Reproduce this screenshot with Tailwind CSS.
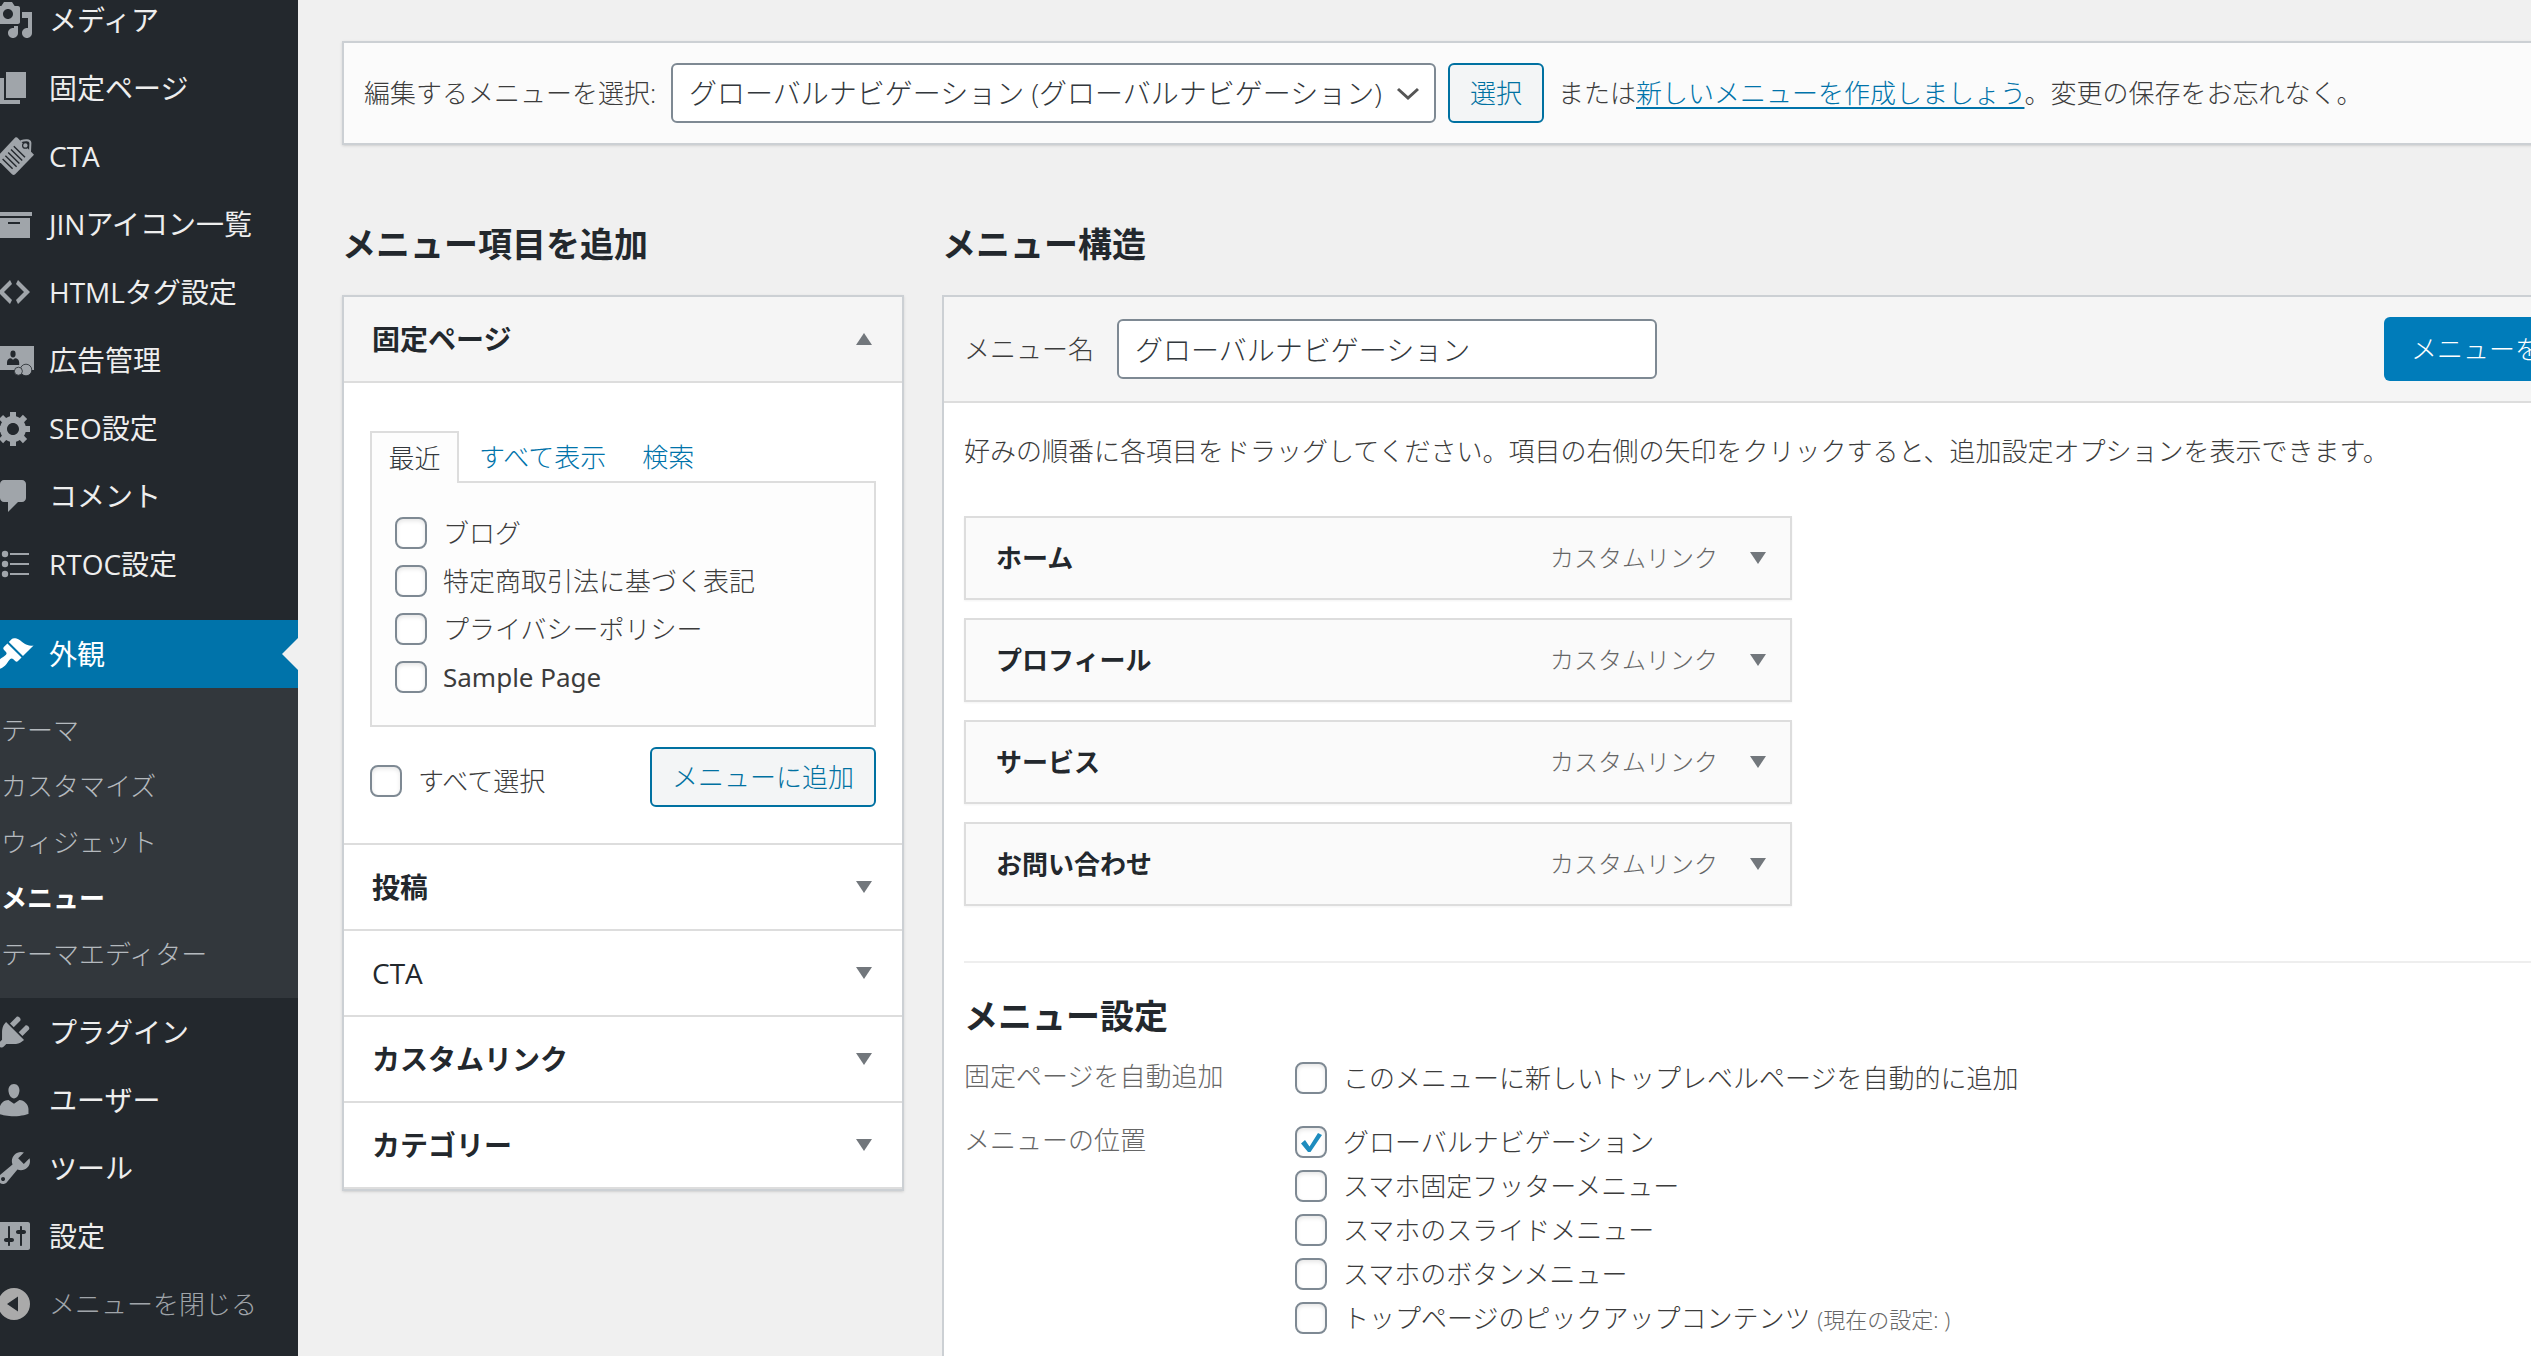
<!DOCTYPE html>
<html lang="ja">
<head>
<meta charset="utf-8">
<title>メニュー</title>
<script src="https://cdn.jsdelivr.net/npm/@tailwindcss/browser@4"></script>
</head>
<body class="flex h-screen overflow-hidden bg-[#f0f0f0] font-['Open_Sans','Noto_Sans_CJK_JP',sans-serif] text-[26px] leading-9 font-light text-[#3c3c3c]">

<nav class="w-[298px] shrink-0 overflow-hidden bg-[#23282d] text-[28px] font-normal text-[#eee]">
  <ul class="-mt-3.5 pb-[22px]">
    <li><a href="#" class="flex h-17 items-center gap-[15px] whitespace-nowrap"><svg class="-ml-1.5 size-10 shrink-0 fill-[#a0a5aa]" viewBox="0 0 20 20"><path d="M13 11V4c0-.55-.45-1-1-1h-1.67L9 1H5L3.67 3H2c-.55 0-1 .45-1 1v7c0 .55.45 1 1 1h10c.55 0 1-.45 1-1zM7 4.5c1.38 0 2.5 1.12 2.5 2.5S8.38 9.5 7 9.5 4.5 8.38 4.5 7 5.62 4.5 7 4.5zM14 6h5v10.5c0 1.38-1.12 2.5-2.5 2.5S14 17.88 14 16.5s1.12-2.5 2.5-2.5c.17 0 .34.02.5.05V9h-3V6zm-4 8.05V13h2v3.5c0 1.38-1.12 2.5-2.5 2.5S7 17.88 7 16.5 8.12 14 9.5 14c.17 0 .34.02.5.05z"/></svg>メディア</a></li>
    <li><a href="#" class="flex h-17 items-center gap-[15px] whitespace-nowrap"><svg class="-ml-1.5 size-10 shrink-0 fill-[#a0a5aa]" viewBox="0 0 20 20"><path d="M6 15V2h10v13H6zm-1 1h8v2H3V5h2v11z"/></svg>固定ページ</a></li>
    <li><a href="#" class="flex h-17 items-center gap-[15px] whitespace-nowrap"><svg class="-ml-1.5 size-10 shrink-0 fill-[#a0a5aa]" viewBox="0 0 20 20"><path d="M11.6.8 20 9.4 10.600 19.100Q9.800 19.800 9 19.100L1.500 11.600Q1 11 1.500 10.400L10.600.8Q11.100.4 11.600.8Z"/><path d="M13.300 2.600C15.500 2 18 1.800 18.200 3.400L18 8" fill="none" stroke="#a0a5aa" stroke-width="1"/><circle cx="15.700" cy="4.700" r="1.400" stroke="#23282d" stroke-width=".6"/><path d="m9.900 5.100 5.600 5.500M8.500 6.700l5.600 5.500M7.100 8.300l5.600 5.500M5.700 9.900l5.600 5.500M4.300 11.500l5 4.900" stroke="#23282d" stroke-width=".7"/></svg>CTA</a></li>
    <li><a href="#" class="flex h-17 items-center gap-[15px] whitespace-nowrap"><svg class="-ml-1.5 size-10 shrink-0 fill-[#a0a5aa]" viewBox="0 0 20 20"><path d="M19 4v2H1V4h18zM2 7h16v10H2V7zm11 3V9H7v1h6z"/></svg>JINアイコン一覧</a></li>
    <li><a href="#" class="flex h-17 items-center gap-[15px] whitespace-nowrap"><svg class="-ml-1.5 size-10 shrink-0 fill-[#a0a5aa]" viewBox="0 0 20 20"><path d="M9 6l-4 4 4 4-1 2-6-6 6-6zm2 8l4-4-4-4 1-2 6 6-6 6z"/></svg>HTMLタグ設定</a></li>
    <li><a href="#" class="flex h-17 items-center gap-[15px] whitespace-nowrap"><svg class="-ml-1.5 size-10 shrink-0 fill-[#a0a5aa]" viewBox="0 0 20 20"><path d="M0 3h20v12H0z"/><g fill="#23282d"><ellipse cx="9.500" cy="7" rx="1.300" ry="1.700"/><path d="M6.500 12.500v-1.300q0-2 2-2.100l1 .8 1-.8q2 .1 2.100 2.100v1.300z"/></g><g stroke="#23282d" stroke-width=".4"><circle cx="16" cy="15" r="2.900"/><circle cx="12.200" cy="15.600" r="2"/></g></svg>広告管理</a></li>
    <li><a href="#" class="flex h-17 items-center gap-[15px] whitespace-nowrap"><svg class="-ml-1.5 size-10 shrink-0 fill-[#a0a5aa]" viewBox="0 0 20 20"><path d="M18 12h-2.18c-.17.7-.44 1.35-.81 1.93l1.54 1.54-2.1 2.1-1.54-1.54c-.58.36-1.23.63-1.91.79V19H8v-2.18c-.68-.16-1.33-.43-1.91-.79l-1.54 1.54-2.12-2.12 1.54-1.54c-.36-.58-.63-1.23-.79-1.91H1V9.03h2.17c.16-.7.44-1.35.8-1.94L2.43 5.55l2.1-2.1 1.54 1.54c.58-.37 1.24-.64 1.93-.81V2h3v2.18c.68.16 1.33.43 1.91.79l1.54-1.54 2.12 2.12-1.54 1.54c.36.59.64 1.24.8 1.94H18V12zm-8.5 1.5c1.66 0 3-1.34 3-3s-1.34-3-3-3-3 1.34-3 3 1.34 3 3 3z"/></svg>SEO設定</a></li>
    <li><a href="#" class="flex h-17 items-center gap-[15px] whitespace-nowrap"><svg class="-ml-1.5 size-10 shrink-0 fill-[#a0a5aa]" viewBox="0 0 20 20"><path d="M5 2h9c1.1 0 2 .9 2 2v7c0 1.1-.9 2-2 2h-2l-5 5v-5H5c-1.1 0-2-.9-2-2V4c0-1.1.9-2 2-2z"/></svg>コメント</a></li>
    <li><a href="#" class="flex h-17 items-center gap-[15px] whitespace-nowrap"><svg class="-ml-1.5 size-10 shrink-0 fill-[#a0a5aa]" viewBox="0 0 20 20"><circle cx="5.500" cy="5" r="1.600"/><circle cx="5.500" cy="10" r="1.600"/><circle cx="5.500" cy="15" r="1.600"/><path d="M8 4.500h9.500v1H8zM8 9.500h9.500v1H8zM8 14.500h9.500v1H8z"/></svg>RTOC設定</a></li>
  </ul>
  <a href="#" class="relative flex h-17 items-center gap-[15px] bg-[#0073aa] text-white"><svg class="-ml-1.5 size-10 shrink-0 fill-white" viewBox="0 0 20 20"><path d="M14.48 11.06L7.41 3.99l1.5-1.5c.5-.56 2.3-.47 3.51.32 1.21.8 1.43 1.28 2.91 2.1 1.18.64 2.45 1.26 4.45.85zm-.71.71L6.7 4.7 4.93 6.47c-.39.39-.39 1.02 0 1.41l1.06 1.06c.39.39.39 1.03 0 1.42-.6.6-1.43 1.11-2.21 1.69-.35.26-.7.53-1.01.84C1.43 14.23.4 16.08 1.4 17.07c.99 1 2.84-.03 4.18-1.36.31-.31.58-.66.85-1.02.57-.78 1.08-1.61 1.69-2.21.39-.39 1.02-.39 1.41 0l1.06 1.06c.39.39 1.02.39 1.41 0z"/></svg>外観<svg class="absolute top-[18px] right-0 h-8 w-4 fill-[#f0f0f0]" viewBox="0 0 16 32"><path d="M16 0v32L0 16z"/></svg></a>
  <ul class="bg-[#32373c] pt-3.5 pb-4 pl-px text-[26px] font-light text-[#b4b9be]">
    <li><a href="#" class="flex h-14 items-center">テーマ</a></li>
    <li><a href="#" class="flex h-14 items-center">カスタマイズ</a></li>
    <li><a href="#" class="flex h-14 items-center">ウィジェット</a></li>
    <li><a href="#" class="flex h-14 items-center font-bold text-white">メニュー</a></li>
    <li><a href="#" class="flex h-14 items-center">テーマエディター</a></li>
  </ul>
  <ul>
    <li><a href="#" class="flex h-17 items-center gap-[15px] whitespace-nowrap"><svg class="-ml-1.5 size-10 shrink-0 fill-[#a0a5aa]" viewBox="0 0 20 20"><path d="M13.11 4.36L9.87 7.6 8 5.73l3.24-3.24c.35-.34 1.05-.2 1.56.32.52.51.66 1.21.31 1.55zm-8 1.77l.91-1.12 9.01 9.01-1.19.84c-.71.71-2.63 1.16-3.82 1.16H6.14L4.9 17.26c-.59.59-1.54.59-2.12 0-.59-.58-.59-1.53 0-2.12l1.24-1.24v-3.88c0-1.13.4-3.19 1.09-3.89zm7.26 3.97l3.24-3.24c.34-.35 1.04-.21 1.55.31.52.51.66 1.21.31 1.55l-3.24 3.25z"/></svg>プラグイン</a></li>
    <li><a href="#" class="flex h-17 items-center gap-[15px] whitespace-nowrap"><svg class="-ml-1.5 size-10 shrink-0 fill-[#a0a5aa]" viewBox="0 0 20 20"><path d="M10 9.25c-2.27 0-2.73-3.44-2.73-3.44C7 4.02 7.82 2 9.97 2c2.16 0 2.98 2.02 2.71 3.81 0 0-.41 3.44-2.68 3.44zm0 2.57L12.72 10c2.39 0 4.52 2.33 4.52 4.53v2.49s-3.65 1.13-7.24 1.13c-3.65 0-7.24-1.13-7.24-1.13v-2.49c0-2.25 1.94-4.48 4.47-4.48z"/></svg>ユーザー</a></li>
    <li><a href="#" class="flex h-17 items-center gap-[15px] whitespace-nowrap"><svg class="-ml-1.5 size-10 shrink-0 fill-[#a0a5aa]" viewBox="0 0 20 20"><path d="M16.68 9.77c-1.34 1.34-3.3 1.67-4.95.99l-5.41 6.52c-.99.99-2.59.99-3.58 0s-.99-2.59 0-3.57l6.52-5.42c-.68-1.65-.35-3.61.99-4.95 1.28-1.28 3.12-1.62 4.72-1.06l-2.89 2.89 2.82 2.82 2.86-2.87c.53 1.58.18 3.39-1.08 4.65zM3.81 16.21c.4.39 1.04.39 1.43 0 .4-.4.4-1.04 0-1.43-.39-.4-1.03-.4-1.43 0-.39.39-.39 1.03 0 1.43z"/></svg>ツール</a></li>
    <li><a href="#" class="flex h-17 items-center gap-[15px] whitespace-nowrap"><svg class="-ml-1.5 size-10 shrink-0 fill-[#a0a5aa]" viewBox="0 0 20 20"><path d="M18 16V4c0-.55-.45-1-1-1H3c-.55 0-1 .45-1 1v12c0 .55.45 1 1 1h14c.55 0 1-.45 1-1zM8 11h1c.55 0 1 .45 1 1s-.45 1-1 1H8v1.5c0 .28-.22.5-.5.5s-.5-.22-.5-.5V13H6c-.55 0-1-.45-1-1s.45-1 1-1h1V5.5c0-.28.22-.5.5-.5s.5.22.5.5V11zm5-2h-1c-.55 0-1-.45-1-1s.45-1 1-1h1V5.5c0-.28.22-.5.5-.5s.5.22.5.5V7h1c.55 0 1 .45 1 1s-.45 1-1 1h-1v5.5c0 .28-.22.5-.5.5s-.5-.22-.5-.5V9z"/></svg>設定</a></li>
    <li><button type="button" class="flex h-17 items-center gap-[15px] text-[26px] font-light whitespace-nowrap text-[#a0a5aa]"><svg class="-ml-1.5 size-10 shrink-0 fill-[#aaa]" viewBox="0 0 20 20"><path fill-rule="evenodd" d="M10 2a8 8 0 1 0 0 16 8 8 0 0 0 0-16zM6.500 10 12 6.200v7.600z"/></svg>メニューを閉じる</button></li>
  </ul>
</nav>

<main class="-mr-[111px] flex min-w-0 flex-1 shrink-0 flex-col pt-[41px] pl-11">
  <div class="flex h-[104px] items-center border-2 border-[#ccd0d4] bg-[#fbfbfb] pl-5 whitespace-nowrap shadow-sm">
    <label for="menu-select" class="w-[307px]">編集するメニューを選択:</label>
    <span class="relative">
      <select id="menu-select" class="h-15 w-[765px] appearance-none rounded-md border-2 border-[#7e8993] bg-white pl-4 text-[28px] text-[#32373c]"><option>グローバルナビゲーション (グローバルナビゲーション)</option></select>
      <svg class="pointer-events-none absolute top-[18px] right-4 size-6 fill-none stroke-[#555] stroke-[3]" viewBox="0 0 24 24"><path d="m2 8 10 9 10-9"/></svg>
    </span>
    <button type="button" class="ml-3 h-15 w-24 rounded-md border-2 border-[#0071a1] bg-[#f3f5f6] text-[#0071a1]">選択</button>
    <p class="ml-3.5">または<a href="#" class="text-[#0073aa] underline decoration-2 underline-offset-4">新しいメニューを作成しましょう</a>。変更の保存をお忘れなく。</p>
  </div>

  <div class="mt-[75px] flex flex-1 gap-[38px]">
    <section class="w-[562px] shrink-0">
      <h2 class="mb-[26px] text-[34px] leading-[49px] font-bold text-[#23282d]">メニュー項目を追加</h2>
      <div class="border-2 border-[#ccd0d4] bg-white shadow-sm">
        <h3><button type="button" class="flex h-[86px] w-full items-center justify-between border-b-2 border-[#ddd] bg-[#f5f5f5] pr-[30px] pl-7 text-[28px] font-bold text-[#23282d]">固定ページ<svg class="h-3 w-4 fill-[#72777c]" viewBox="0 0 16 12"><path d="M8 0l8 12H0z"/></svg></button></h3>
        <div class="h-[462px] border-b-2 border-[#ddd] px-[26px] pt-12">
          <div class="flex">
            <a href="#" class="relative -mb-0.5 flex h-[52px] w-[89px] items-center justify-center border-2 border-b-0 border-[#ddd] bg-[#fdfdfd] text-[#32373c]">最近</a>
            <a href="#" class="flex h-[52px] items-center pl-5 text-[#0073aa]">すべて表示</a>
            <a href="#" class="flex h-[52px] items-center pl-9 text-[#0073aa]">検索</a>
          </div>
          <div class="-mt-0.5 h-[246px] border-2 border-[#ddd] bg-[#fdfdfd] pt-[26px] pl-[23px]">
            <label class="flex h-12 items-center gap-4"><input type="checkbox" class="size-8 appearance-none rounded-lg border-2 border-[#7e8993] bg-white shadow-[inset_0_2px_4px_rgba(0,0,0,0.1)]">ブログ</label>
            <label class="flex h-12 items-center gap-4"><input type="checkbox" class="size-8 appearance-none rounded-lg border-2 border-[#7e8993] bg-white shadow-[inset_0_2px_4px_rgba(0,0,0,0.1)]">特定商取引法に基づく表記</label>
            <label class="flex h-12 items-center gap-4"><input type="checkbox" class="size-8 appearance-none rounded-lg border-2 border-[#7e8993] bg-white shadow-[inset_0_2px_4px_rgba(0,0,0,0.1)]">プライバシーポリシー</label>
            <label class="flex h-12 items-center gap-4 font-['Noto_Sans',sans-serif] font-normal"><input type="checkbox" class="size-8 appearance-none rounded-lg border-2 border-[#7e8993] bg-white shadow-[inset_0_2px_4px_rgba(0,0,0,0.1)]">Sample Page</label>
          </div>
          <div class="mt-5 flex items-end justify-between">
            <label class="flex items-center gap-4 pb-2"><input type="checkbox" class="size-8 appearance-none rounded-lg border-2 border-[#7e8993] bg-white shadow-[inset_0_2px_4px_rgba(0,0,0,0.1)]">すべて選択</label>
            <button type="button" class="h-15 w-[226px] rounded-md border-2 border-[#0071a1] bg-[#f3f5f6] text-[#0071a1]">メニューに追加</button>
          </div>
        </div>
        <h3><button type="button" class="flex h-[86px] w-full items-center justify-between border-b-2 border-[#ddd] pr-[30px] pl-7 text-[28px] font-bold text-[#23282d]">投稿<svg class="h-3 w-4 fill-[#72777c]" viewBox="0 0 16 12"><path d="M0 0h16L8 12z"/></svg></button></h3>
        <h3><button type="button" class="flex h-[86px] w-full items-center justify-between border-b-2 border-[#ddd] pr-[30px] pl-7 text-[28px] font-medium text-[#23282d]">CTA<svg class="h-3 w-4 fill-[#72777c]" viewBox="0 0 16 12"><path d="M0 0h16L8 12z"/></svg></button></h3>
        <h3><button type="button" class="flex h-[86px] w-full items-center justify-between border-b-2 border-[#ddd] pr-[30px] pl-7 text-[28px] font-bold text-[#23282d]">カスタムリンク<svg class="h-3 w-4 fill-[#72777c]" viewBox="0 0 16 12"><path d="M0 0h16L8 12z"/></svg></button></h3>
        <h3><button type="button" class="flex h-[86px] w-full items-center justify-between border-b-2 border-[#ddd] pr-[30px] pl-7 text-[28px] font-bold text-[#23282d]">カテゴリー<svg class="h-3 w-4 fill-[#72777c]" viewBox="0 0 16 12"><path d="M0 0h16L8 12z"/></svg></button></h3>
      </div>
    </section>

    <section class="flex min-w-0 flex-1 flex-col">
      <h2 class="mb-[26px] text-[34px] leading-[49px] font-bold text-[#23282d]">メニュー構造</h2>
      <div class="flex-1 border-2 border-b-0 border-[#ccd0d4] bg-white whitespace-nowrap">
        <div class="flex h-[106px] items-center border-b-2 border-[#ddd] bg-[#f5f5f5] px-5">
          <label for="menu-name" class="w-[153px]">メニュー名</label>
          <input id="menu-name" type="text" value="グローバルナビゲーション" class="h-15 w-[540px] rounded-md border-2 border-[#7e8993] bg-white px-4 text-[28px] text-[#32373c]">
          <button type="button" class="ml-auto h-16 w-[236px] rounded-md bg-[#007cba] text-white">メニューを保存</button>
        </div>
        <div class="px-5 pt-[30px]">
          <p>好みの順番に各項目をドラッグしてください。項目の右側の矢印をクリックすると、追加設定オプションを表示できます。</p>
          <ul class="mt-[47px] flex w-[828px] flex-col gap-[18px]">
            <li class="flex h-21 items-center border-2 border-[#ddd] bg-[#fafafa] pr-6 pl-7.5 font-bold text-[#23282d] shadow-xs">ホーム<span class="mr-8 ml-auto text-[24px] font-light text-[#666]">カスタムリンク</span><svg class="h-3 w-4 fill-[#72777c]" viewBox="0 0 16 12"><path d="M0 0h16L8 12z"/></svg></li>
            <li class="flex h-21 items-center border-2 border-[#ddd] bg-[#fafafa] pr-6 pl-7.5 font-bold text-[#23282d] shadow-xs">プロフィール<span class="mr-8 ml-auto text-[24px] font-light text-[#666]">カスタムリンク</span><svg class="h-3 w-4 fill-[#72777c]" viewBox="0 0 16 12"><path d="M0 0h16L8 12z"/></svg></li>
            <li class="flex h-21 items-center border-2 border-[#ddd] bg-[#fafafa] pr-6 pl-7.5 font-bold text-[#23282d] shadow-xs">サービス<span class="mr-8 ml-auto text-[24px] font-light text-[#666]">カスタムリンク</span><svg class="h-3 w-4 fill-[#72777c]" viewBox="0 0 16 12"><path d="M0 0h16L8 12z"/></svg></li>
            <li class="flex h-21 items-center border-2 border-[#ddd] bg-[#fafafa] pr-6 pl-7.5 font-bold text-[#23282d] shadow-xs">お問い合わせ<span class="mr-8 ml-auto text-[24px] font-light text-[#666]">カスタムリンク</span><svg class="h-3 w-4 fill-[#72777c]" viewBox="0 0 16 12"><path d="M0 0h16L8 12z"/></svg></li>
          </ul>
          <div class="mt-[55px] border-t-2 border-[#eee] pt-[29px]">
            <h3 class="text-[34px] leading-[49px] font-bold text-[#23282d]">メニュー設定</h3>
            <fieldset class="mt-[15px] flex">
              <legend class="float-left w-[331px] pt-0.5 text-[#666]">固定ページを自動追加</legend>
              <label class="flex h-11 items-center gap-4"><input type="checkbox" class="size-8 appearance-none rounded-lg border-2 border-[#7e8993] bg-white shadow-[inset_0_2px_4px_rgba(0,0,0,0.1)]">このメニューに新しいトップレベルページを自動的に追加</label>
            </fieldset>
            <fieldset class="mt-5 flex">
              <legend class="float-left w-[331px] pt-0.5 text-[#666]">メニューの位置</legend>
              <div>
                <label class="flex h-11 items-center gap-4"><span class="relative size-8"><input type="checkbox" checked class="block size-8 appearance-none rounded-lg border-2 border-[#7e8993] bg-white shadow-[inset_0_2px_4px_rgba(0,0,0,0.1)]"><svg class="absolute inset-0 size-8 fill-[#1e8cbe]" viewBox="0 0 32 32"><path d="M6 17.500 10 14l4.500 6.500L23 7l4 2-11.500 17h-2.500z"/></svg></span>グローバルナビゲーション</label>
                <label class="flex h-11 items-center gap-4"><input type="checkbox" class="size-8 appearance-none rounded-lg border-2 border-[#7e8993] bg-white shadow-[inset_0_2px_4px_rgba(0,0,0,0.1)]">スマホ固定フッターメニュー</label>
                <label class="flex h-11 items-center gap-4"><input type="checkbox" class="size-8 appearance-none rounded-lg border-2 border-[#7e8993] bg-white shadow-[inset_0_2px_4px_rgba(0,0,0,0.1)]">スマホのスライドメニュー</label>
                <label class="flex h-11 items-center gap-4"><input type="checkbox" class="size-8 appearance-none rounded-lg border-2 border-[#7e8993] bg-white shadow-[inset_0_2px_4px_rgba(0,0,0,0.1)]">スマホのボタンメニュー</label>
                <label class="flex h-11 items-center gap-4"><input type="checkbox" class="size-8 appearance-none rounded-lg border-2 border-[#7e8993] bg-white shadow-[inset_0_2px_4px_rgba(0,0,0,0.1)]"><span>トップページのピックアップコンテンツ <span class="text-[22px] text-[#666]">(現在の設定: )</span></span></label>
              </div>
            </fieldset>
          </div>
        </div>
      </div>
    </section>
  </div>
</main>
</body>
</html>
